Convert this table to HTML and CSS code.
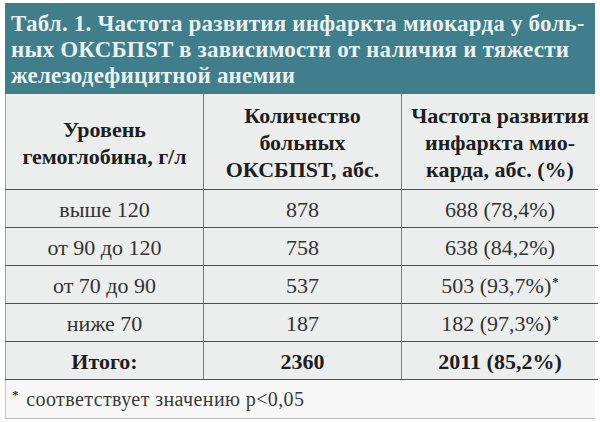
FILE: index.html
```
<!DOCTYPE html>
<html lang="ru">
<head>
<meta charset="utf-8">
<link rel="stylesheet" href="styles.css">
</head>
<body>
<div class="card">
  <div class="caption">Табл. 1. Частота развития инфаркта миокарда у боль-<br>ных ОКСБПST в зависимости от наличия и тяжести<br>железодефицитной анемии</div>
  <table class="data">
    <thead>
      <tr>
        <th class="c1">Уровень<br>гемоглобина, г/л</th>
        <th class="c2">Количество<br>больных<br>ОКСБПST, абс.</th>
        <th class="c3">Частота развития<br>инфаркта мио-<br>карда, абс. (%)</th>
      </tr>
    </thead>
    <tbody>
      <tr><td>выше 120</td><td>878</td><td>688 (78,4%)</td></tr>
      <tr><td>от 90 до 120</td><td>758</td><td>638 (84,2%)</td></tr>
      <tr><td>от 70 до 90</td><td>537</td><td>503 (93,7%)<sup class="mark">*</sup></td></tr>
      <tr><td>ниже 70</td><td>187</td><td>182 (97,3%)<sup class="mark">*</sup></td></tr>
      <tr class="total"><td>Итого:</td><td>2360</td><td>2011 (85,2%)</td></tr>
    </tbody>
  </table>
  <div class="note"><sup class="mark">*</sup> соответствует значению p&lt;0,05</div>
</div>
</body>
</html>
```
FILE: styles.css
```
html, body {
  margin: 0;
  padding: 0;
  background: #ffffff;
}
body {
  padding: 3px 5px;
  font-family: "Liberation Serif", "Times New Roman", serif;
}
.card {
  width: 590px;
  background: #eceeee;
  border-bottom: 1px solid #b8bcbc;
}
.caption {
  background: #3f7e8a;
  color: #e9f1f2;
  font-weight: bold;
  font-size: 23px;
  line-height: 26px;
  height: 78px;
  padding: 8px 6px 5px 6px;
  white-space: nowrap;
  letter-spacing: 0.2px;
}
.data {
  width: 590px;
  border-collapse: collapse;
  table-layout: fixed;
  color: #2a2a2a;
}
.data th, .data td {
  text-align: center;
  padding: 0;
  border-left: 1px solid #7a7d7d;
  border-bottom: 1px solid #4f5252;
}
.data th:first-child, .data td:first-child {
  border-left: 1px solid #9a9d9d;
}
.data th {
  height: 93px;
  padding-top: 2px;
  font-weight: bold;
  font-size: 22px;
  line-height: 27px;
  color: #1e1e1e;
}
.c1 { width: 197px; }
.c2 { width: 197px; }
.c3 { width: 196px; }
.data td {
  height: 35px;
  padding-top: 2px;
  font-size: 22px;
  line-height: 26px;
  color: #333;
}
.data tr.total td {
  font-weight: bold;
  color: #1e1e1e;
}
.mark {
  font-size: 13px;
  font-weight: bold;
  vertical-align: 7px;
  line-height: 0;
  margin-left: 1px;
}
.note {
  background: #f7f7f7;
  height: 38px;
  line-height: 38px;
  padding-left: 6px;
  font-size: 20px;
  letter-spacing: 0.4px;
  color: #3a3a3a;
  border-left: 1px solid #c4c6c6;
}
.note .mark {
  margin-left: 0;
  margin-right: 2px;
}
```
